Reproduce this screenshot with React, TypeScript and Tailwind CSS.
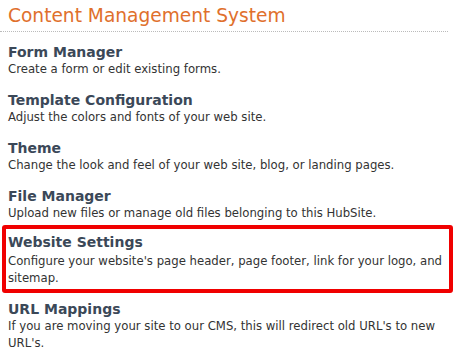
const sections = [
  { title: 'Form Manager', desc: 'Create a form or edit existing forms.' },
  { title: 'Template Configuration', desc: 'Adjust the colors and fonts of your web site.' },
  { title: 'Theme', desc: 'Change the look and feel of your web site, blog, or landing pages.' },
  { title: 'File Manager', desc: 'Upload new files or manage old files belonging to this HubSite.' },
  {
    title: 'Website Settings',
    desc: "Configure your website's page header, page footer, link for your logo, and sitemap.",
    highlight: true,
  },
  {
    title: 'URL Mappings',
    desc: "If you are moving your site to our CMS, this will redirect old URL's to new URL's.",
  },
];

function Section({ title, desc, tall }: { title: string; desc: string; tall?: boolean }) {
  return (
    <div>
      <h3 className={`text-[14px] leading-[17px] font-bold text-[#3b4858] ${tall ? 'mb-[2px]' : ''}`}>{title}</h3>
      <p className="text-[11.7px] leading-[17px] text-[#333]">{desc}</p>
    </div>
  );
}

export default function App() {
  return (
    <div className="w-[475px] h-[364px] bg-white overflow-hidden" style={{ fontFamily: '"DejaVu Sans", Verdana, sans-serif' }}>
      <div className="w-[448px] border-b border-dotted border-[#bbb] pl-2 pt-[5px] pb-[4px]">
        <h1 className="text-[18.6px] leading-[22px] text-[#e0702c]">Content Management System</h1>
      </div>
      <div className="flex flex-col gap-[14px] pt-[12px]">
        {sections.map((s) =>
          s.highlight ? (
            <div
              key={s.title}
              className="ml-[2px] w-[451px] border-[4px] border-[#f00000] rounded-[3px] pl-[2px] pt-[5px] pb-[2px] -mt-[11px] -mb-[6px]"
            >
              <Section title={s.title} desc={s.desc} tall />
            </div>
          ) : (
            <div key={s.title} className="pl-2 w-[449px]">
              <Section title={s.title} desc={s.desc} />
            </div>
          )
        )}
      </div>
    </div>
  );
}
